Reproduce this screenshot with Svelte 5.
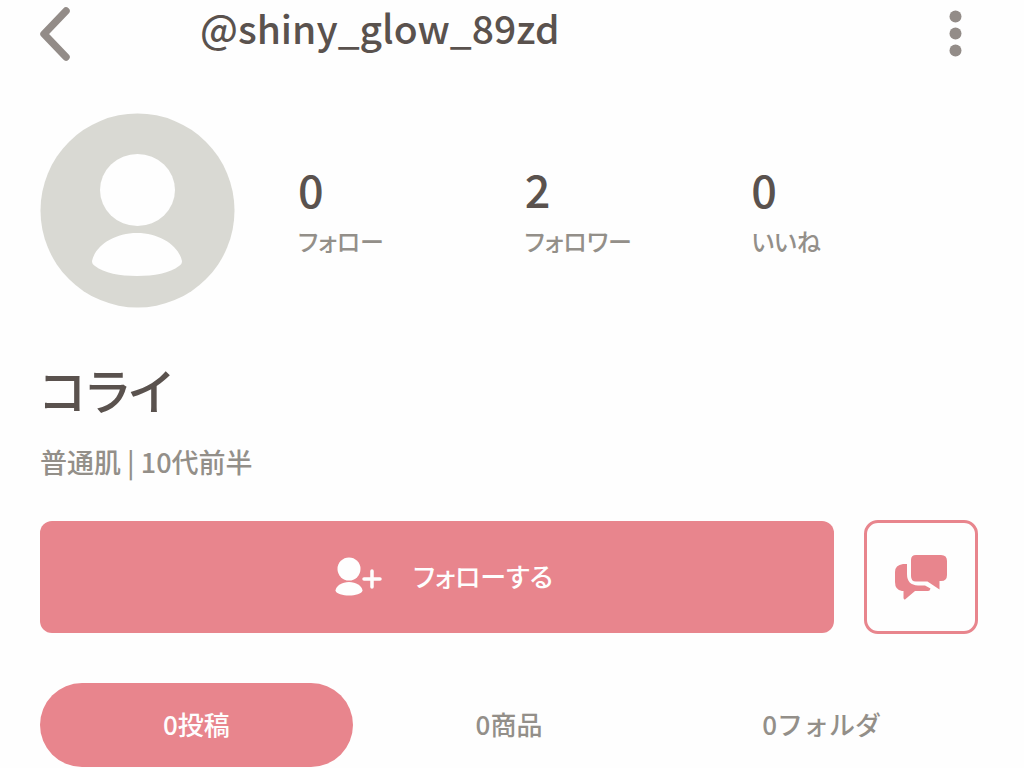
<script lang="ts">
  const stats = [
    { value: 0, label: 'フォロー' },
    { value: 2, label: 'フォロワー' },
    { value: 0, label: 'いいね' },
  ];
  const tabs = ['0投稿', '0商品', '0フォルダ'];

  let active = $state(0);
</script>

<div class="profile">
  <header class="header">
    <button class="icon-btn back" aria-label="戻る">
      <svg width="32" height="54" viewBox="0 0 32 54">
        <path d="M26 4 4 27 26 50" fill="none" stroke="#938c88" stroke-width="7.500" stroke-linecap="round" stroke-linejoin="round" />
      </svg>
    </button>
    <h1 class="title">@shiny_glow_89zd</h1>
    <button class="icon-btn" aria-label="メニュー">
      <svg width="46" height="54" viewBox="0 0 46 54">
        <g fill="#938c88">
          <circle cx="23.500" cy="9.500" r="6" />
          <circle cx="23.500" cy="26.500" r="6" />
          <circle cx="23.500" cy="43.500" r="6" />
        </g>
      </svg>
    </button>
  </header>

  <section class="summary">
    <svg class="avatar" viewBox="0 0 195 195" aria-hidden="true">
      <circle cx="97.500" cy="97.500" r="97" fill="#d9d9d3" />
      <ellipse cx="97.500" cy="77" rx="37.500" ry="36" fill="#fefefe" />
      <path d="M97 120C120 120 139 133 142 148C142 150 141 152 139 153C130 160 114 163 97 163C80 163 64 160 55 153C53 152 52 150 52 148C55 133 74 120 97 120Z" fill="#fefefe" />
    </svg>
    <div class="stats">
      {#each stats as stat}
        <div class="stat">
          <span class="value">{stat.value}</span>
          <span class="label">{stat.label}</span>
        </div>
      {/each}
    </div>
  </section>

  <h2 class="name">コライ</h2>
  <p class="meta">普通肌 | 10代前半</p>

  <div class="actions">
    <button class="follow">
      <svg width="48" height="40" viewBox="0 0 48 40" aria-hidden="true">
        <g fill="#fefefe">
          <circle cx="14" cy="12" r="11.500" />
          <path d="M14 25C21 25 27 29 27.500 33.500C27 37 20 38.500 14 38.500C8 38.500 1 37 .5 33.500C1 29 7 25 14 25Z" />
        </g>
        <path d="M29 22H45M37 14V30" fill="none" stroke="#fefefe" stroke-width="3.500" stroke-linecap="round" />
      </svg>
      <span class="follow-text">フォローする</span>
    </button>
    <button class="message" aria-label="メッセージ">
      <svg width="52" height="46" viewBox="0 0 52 46">
        <g fill="#e8858d">
          <path d="M21 1H46Q52 1 52 7V21Q52 27 46 27H44.500V35.500L32.500 27.500H21Q16 27.500 16 22V6Q16 1 21 1Z" />
          <path d="M12 10V20Q12 31 23 31.500H30L35.500 34.500Q35 37 33 37H20L10 45.500Q9 46 8.500 44V37H7Q0 36 0 28V18Q0 11 8 10Z" />
        </g>
      </svg>
    </button>
  </div>

  <div class="tabs" role="tablist">
    {#each tabs as tab, i}
      <button
        class="tab"
        class:active={active === i}
        role="tab"
        aria-selected={active === i}
        onclick={() => (active = i)}
      >{tab}</button>
    {/each}
  </div>
</div>

<style>
  :global(body) {
    margin: 0;
    background: #fefefe;
  }
  .profile {
    box-sizing: border-box;
    padding: 0 46px 0 40px;
    font-family: 'Noto Sans CJK JP', sans-serif;
    font-weight: 500;
    font-feature-settings: 'palt';
    color: #5a524e;
  }
  button {
    padding: 0;
    border: none;
    background: none;
    font: inherit;
    font-feature-settings: inherit;
    cursor: pointer;
  }
  svg { display: block; }
  h1, h2, p {
    margin: 0;
    font-weight: 500;
  }
  .header {
    display: flex;
    align-items: flex-start;
  }
  .icon-btn { padding: 7px 0 5px; }
  .back { width: 160px; }
  .title {
    flex: 1;
    font-size: 39px;
    line-height: 54px;
  }
  .summary {
    display: flex;
    align-items: center;
    gap: 63px;
    margin-top: 47px;
  }
  .avatar {
    flex: none;
    width: 195px;
    height: 195px;
  }
  .stats {
    flex: 1;
    display: grid;
    grid-template-columns: repeat(3, 1fr);
    padding-bottom: 4px;
  }
  .stat {
    display: flex;
    flex-direction: column;
  }
  .value {
    font-size: 45px;
    line-height: 64px;
  }
  .label {
    font-size: 24px;
    line-height: 40px;
    color: #938f89;
  }
  .name {
    margin-top: 49px;
    font-size: 49px;
    line-height: 64px;
  }
  .meta {
    margin-top: 20px;
    font-size: 27px;
    line-height: 42px;
    color: #938f89;
  }
  .actions {
    display: flex;
    align-items: center;
    gap: 30px;
    margin-top: 37px;
  }
  .follow {
    flex: 1;
    display: flex;
    align-items: center;
    justify-content: center;
    gap: 30px;
    height: 112px;
    padding-left: 14px;
    border-radius: 12px;
    background: #e8858d;
    color: #fefefe;
    font-size: 26px;
  }
  .follow-text { padding-bottom: 4px; }
  .message {
    display: flex;
    align-items: center;
    justify-content: center;
    box-sizing: border-box;
    width: 114px;
    height: 114px;
    border: 3px solid #e8858d;
    border-radius: 14px;
  }
  .tabs {
    display: grid;
    grid-template-columns: repeat(3, 1fr);
    margin-top: 49px;
  }
  .tab {
    height: 84px;
    padding-bottom: 4px;
    border-radius: 42px;
    font-size: 26px;
    font-feature-settings: normal;
    color: #938f89;
  }
  .tab.active {
    background: #e8858d;
    color: #fefefe;
  }
</style>
